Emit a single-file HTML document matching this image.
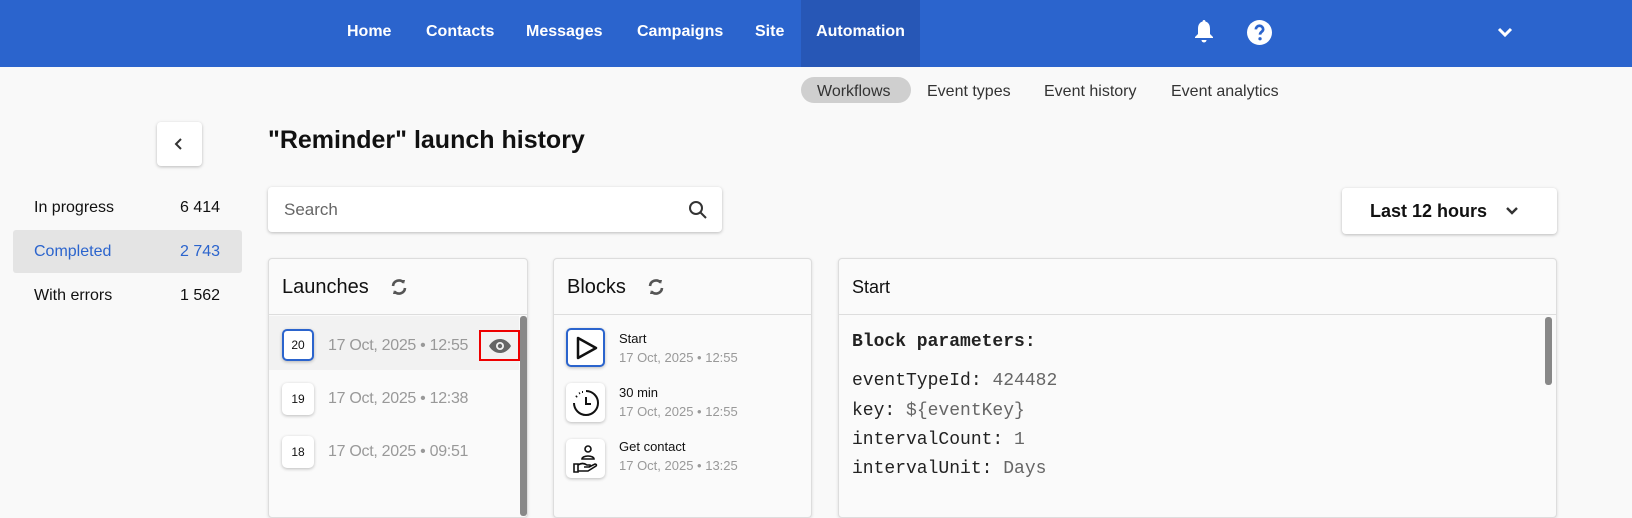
<!DOCTYPE html>
<html><head><style>
*{box-sizing:border-box;margin:0;padding:0}
body{width:1632px;height:507px;overflow:hidden;background:#f9f9f9;font-family:"Liberation Sans",sans-serif;color:#111;position:relative}
.hdr{position:absolute;left:0;top:0;width:1632px;height:67px;background:#2b64cd}
.nav{position:absolute;top:0;height:67px;line-height:64px;color:#fff;font-size:16px;font-weight:bold}
.act{background:#2757b6}
.abs{position:absolute}
.sub{position:absolute;top:79px;font-size:16px;color:#333;height:25px;line-height:25px}
.card{position:absolute;top:258px;height:260px;background:#fafafa;border:1px solid #ddd;border-radius:4px;box-shadow:0 1px 3px rgba(0,0,0,.12)}
.ch{height:56px;border-bottom:1px solid #ddd;font-size:20px;line-height:56px;padding-left:13px}
.num{position:absolute;left:13px;width:32px;height:32px;border-radius:5px;background:#fff;box-shadow:0 1px 3px rgba(0,0,0,.25);font-size:12px;text-align:center;line-height:32px}
.dt{position:absolute;left:59px;font-size:16px;color:#999;letter-spacing:-0.3px}
.bi{position:absolute;left:12px;width:39px;height:39px;border-radius:5px;background:#fff;box-shadow:0 1px 3px rgba(0,0,0,.25)}
.bt{position:absolute;left:65px;font-size:13px;color:#111}
.bd{position:absolute;left:65px;font-size:13px;color:#999}
.mono{position:absolute;left:13px;font-family:"Liberation Mono",monospace;font-size:18px;color:#222}
.mono span{color:#666}
</style></head><body>
<div class="hdr"></div>
<div class="nav" style="left:347px">Home</div>
<div class="nav" style="left:426px">Contacts</div>
<div class="nav" style="left:526px">Messages</div>
<div class="nav" style="left:637px">Campaigns</div>
<div class="nav" style="left:755px">Site</div>
<div class="nav act" style="left:801px;width:119px;text-align:center">Automation</div>
<svg class="abs" style="left:1192px;top:19px" width="24" height="26" viewBox="0 0 24 26"><path d="M12 1c1 0 1.5.8 1.5 1.6C17 3.5 18 6.5 18 10v5l3 3v1H3v-1l3-3v-5c0-3.5 1-6.5 4.5-7.4C10.5 1.8 11 1 12 1z" fill="#fff"/><path d="M9.5 21a2.5 2.5 0 005 0z" fill="#fff"/></svg>
<svg class="abs" style="left:1247px;top:20px" width="25" height="25" viewBox="0 0 24 24"><circle cx="12" cy="12" r="12" fill="#fff"/><path d="M8.5 9a3.5 3.5 0 117 0c0 2.2-3 2.5-3 5" stroke="#2b64cd" stroke-width="2.6" fill="none"/><circle cx="12.5" cy="18" r="1.6" fill="#2b64cd"/></svg>
<svg class="abs" style="left:1497px;top:27px" width="16" height="12" viewBox="0 0 16 12"><path d="M2 2l6 6 6-6" stroke="#fff" stroke-width="3" fill="none"/></svg>
<div class="abs" style="left:801px;top:77px;width:110px;height:26px;border-radius:13px;background:#cfcfcf"></div>
<div class="sub" style="left:817px">Workflows</div>
<div class="sub" style="left:927px">Event types</div>
<div class="sub" style="left:1044px">Event history</div>
<div class="sub" style="left:1171px">Event analytics</div>
<div class="abs" style="left:157px;top:122px;width:45px;height:44px;background:#fff;border-radius:4px;box-shadow:0 1px 3px rgba(0,0,0,.25)"><svg style="position:absolute;left:17px;top:16px" width="10" height="12" viewBox="0 0 10 12"><path d="M7 1L2 6l5 5" stroke="#333" stroke-width="2" fill="none"/></svg></div>
<div class="abs" style="left:268px;top:126px;font-size:25px;font-weight:bold">"Reminder" launch history</div>
<div class="abs" style="left:34px;top:199px;font-size:16px">In progress</div><div class="abs" style="left:180px;top:199px;font-size:16px">6 414</div>
<div class="abs" style="left:13px;top:230px;width:229px;height:43px;background:#e4e4e4;border-radius:3px"></div>
<div class="abs" style="left:34px;top:243px;font-size:16px;color:#2b64cd">Completed</div><div class="abs" style="left:180px;top:243px;font-size:16px;color:#2b64cd">2 743</div>
<div class="abs" style="left:34px;top:287px;font-size:16px">With errors</div><div class="abs" style="left:180px;top:287px;font-size:16px">1 562</div>
<div class="abs" style="left:268px;top:187px;width:454px;height:45px;background:#fff;border-radius:4px;box-shadow:0 1px 3px rgba(0,0,0,.25)"><div style="position:absolute;left:16px;top:13px;font-size:17px;color:#666">Search</div><svg style="position:absolute;left:420px;top:13px" width="20" height="20" viewBox="0 0 20 20"><circle cx="8" cy="8" r="6" stroke="#333" stroke-width="2" fill="none"/><path d="M12.5 12.5L18 18" stroke="#333" stroke-width="2"/></svg></div>
<div class="abs" style="left:1342px;top:188px;width:215px;height:46px;background:#fff;border-radius:4px;box-shadow:0 1px 3px rgba(0,0,0,.25)"><div style="position:absolute;left:28px;top:13px;font-size:18px;font-weight:bold">Last 12 hours</div><svg style="position:absolute;left:164px;top:19px" width="12" height="8" viewBox="0 0 12 8"><path d="M1 1l5 5 5-5" stroke="#333" stroke-width="2.4" fill="none"/></svg></div>

<div class="card" style="left:268px;width:260px">
<div class="ch">Launches<svg style="position:absolute;left:121px;top:19px" width="18" height="18" viewBox="0 0 18 18"><path d="M3 8a6 6 0 0110.5-3.5M15 10a6 6 0 01-10.5 3.5" stroke="#555" stroke-width="2.6" fill="none"/><path d="M12 2l3 0-1 4z M6 16l-3 0 1-4z" fill="#555"/></svg></div>
<div class="abs" style="left:0;top:57px;width:250px;height:54px;background:#f2f2f2"></div>
<div class="num" style="top:70px;border:2px solid #2b64cd;line-height:28px">20</div><div class="dt" style="top:78px">17 Oct, 2025 • 12:55</div>
<div class="abs" style="left:210px;top:71px;width:41px;height:31px;border:2px solid #e00"><svg style="position:absolute;left:7px;top:6px" width="24" height="16" viewBox="0 0 24 16"><path d="M1 8c3-5 7-7 11-7s8 2 11 7c-3 5-7 7-11 7S4 13 1 8z" fill="#666"/><circle cx="12" cy="8" r="4" fill="#f2f2f2"/><circle cx="12" cy="8" r="2.2" fill="#666"/></svg></div>
<div class="num" style="top:124px">19</div><div class="dt" style="top:131px">17 Oct, 2025 • 12:38</div>
<div class="num" style="top:177px">18</div><div class="dt" style="top:184px">17 Oct, 2025 • 09:51</div>
<div class="abs" style="left:251px;top:57px;width:7px;height:200px;background:#888;border-radius:3px"></div>
</div>

<div class="card" style="left:553px;width:259px">
<div class="ch">Blocks<svg style="position:absolute;left:93px;top:19px" width="18" height="18" viewBox="0 0 18 18"><path d="M3 8a6 6 0 0110.5-3.5M15 10a6 6 0 01-10.5 3.5" stroke="#555" stroke-width="2.6" fill="none"/><path d="M12 2l3 0-1 4z M6 16l-3 0 1-4z" fill="#555"/></svg></div>
<div class="bi" style="top:69px;border:2px solid #2b64cd"><svg style="position:absolute;left:7px;top:6px" width="24" height="24" viewBox="0 0 24 24"><path d="M3 2l18 10-18 10z" stroke="#111" stroke-width="2.5" fill="none" stroke-linejoin="round"/></svg></div>
<div class="bt" style="top:72px">Start</div><div class="bd" style="top:91px">17 Oct, 2025 • 12:55</div>
<div class="bi" style="top:124px"><svg style="position:absolute;left:6px;top:6px" width="28" height="28" viewBox="0 0 28 28"><path d="M14 2a12 12 0 11-12 12" stroke="#111" stroke-width="2" fill="none"/><path d="M4 8l1 -1M7 4.5l1-.5M10 3l1 0" stroke="#111" stroke-width="2"/><path d="M14 8v7h5" stroke="#111" stroke-width="2" fill="none"/></svg></div>
<div class="bt" style="top:126px">30 min</div><div class="bd" style="top:145px">17 Oct, 2025 • 12:55</div>
<div class="bi" style="top:180px"><svg style="position:absolute;left:6px;top:5px" width="28" height="30" viewBox="0 0 28 30"><circle cx="16" cy="5" r="3" stroke="#111" stroke-width="1.6" fill="none"/><path d="M10 15a6 3 0 0112 0z" stroke="#111" stroke-width="1.6" fill="none"/><path d="M2 20h4v8H2zM6 21c3-2 6-2 9 0h3c1 1 0 2-1 2h-5M6 27h10l8-5c1-1 0-2-1-2l-6 3" stroke="#111" stroke-width="1.6" fill="none"/></svg></div>
<div class="bt" style="top:180px">Get contact</div><div class="bd" style="top:199px">17 Oct, 2025 • 13:25</div>
</div>

<div class="card" style="left:838px;width:719px">
<div class="ch" style="font-size:18px">Start</div>
<div class="mono" style="top:73px;font-weight:bold">Block parameters:</div>
<div class="mono" style="top:112px">eventTypeId: <span>424482</span></div>
<div class="mono" style="top:142px">key: <span>${eventKey}</span></div>
<div class="mono" style="top:171px">intervalCount: <span>1</span></div>
<div class="mono" style="top:200px">intervalUnit: <span>Days</span></div>
<div class="abs" style="left:706px;top:58px;width:7px;height:68px;background:#888;border-radius:3px"></div>
</div>
</body></html>
